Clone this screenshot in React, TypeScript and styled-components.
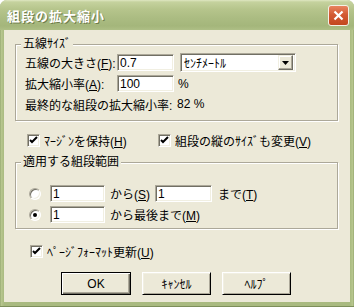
import React from "react";
import styled, { createGlobalStyle } from "styled-components";

const GlobalStyle = createGlobalStyle`
  html, body {
    margin: 0;
    padding: 0;
    background: #ffffff;
  }
  body {
    font-family: "Liberation Sans", "Noto Sans CJK JP", sans-serif;
    font-size: 12px;
    color: #000;
  }
`;

const Window = styled.div`
  width: 354px;
  height: 307px;
  box-sizing: border-box;
  display: flex;
  flex-direction: column;
  border-radius: 7px 7px 0 0;
  overflow: hidden;
  background: linear-gradient(
    to right,
    #8c9f68 0,
    #b9c890 1px,
    #a9ba80 4px,
    #a9ba80 calc(100% - 4px),
    #b9c890 calc(100% - 1px),
    #8c9f68 100%
  );
  padding: 0 4px 5px 4px;
  box-shadow: inset 0 -1px 0 #7d8f5a;
`;

const TitleBar = styled.div`
  height: 30px;
  margin: 0 -4px;
  padding: 0 5px 0 7px;
  display: flex;
  align-items: center;
  justify-content: space-between;
  background: linear-gradient(
    to bottom,
    #dfe7c2 0,
    #c5d29e 2px,
    #b6c58c 9px,
    #abbc82 18px,
    #a4b67b 26px,
    #aebf86 30px
  );
`;

const Title = styled.span`
  color: #fff;
  font-family: "Noto Sans CJK JP", sans-serif;
  font-weight: bold;
  font-size: 13px;
  letter-spacing: 1px;
  text-shadow: 1px 1px 0 #6e7d4c;
`;

const CloseButton = styled.div`
  width: 21px;
  height: 21px;
  box-sizing: border-box;
  border: 1px solid #f4f1e6;
  border-radius: 3px;
  background: linear-gradient(to bottom, #e8845f, #d35a33 45%, #c3471f);
  display: flex;
  align-items: center;
  justify-content: center;
`;

const Body = styled.div`
  flex: 1;
  background: #ece9d8;
  display: flex;
  flex-direction: column;
  padding: 14px 12px 0 11px;
`;

const Group = styled.div<{ $padTop: number; $padBottom: number; $padLeft: number; $marginTop?: number }>`
  position: relative;
  border: 1px solid #aca899;
  box-shadow: inset 1px 1px 0 #fff, 1px 1px 0 #fff;
  margin-top: ${(p) => p.$marginTop ?? 0}px;
  padding: ${(p) => p.$padTop}px 8px ${(p) => p.$padBottom}px ${(p) => p.$padLeft}px;
  display: flex;
  flex-direction: column;
  gap: 4px;
`;

const GroupTitle = styled.span`
  position: absolute;
  top: -9px;
  left: 5px;
  padding: 0 2px;
  line-height: 16px;
  background: #ece9d8;
`;

const Row = styled.div<{ $height?: number }>`
  display: flex;
  align-items: center;
  height: ${(p) => p.$height ?? 17}px;
`;

const Label = styled.span<{ $width?: number; $gap?: number }>`
  white-space: nowrap;
  ${(p) => (p.$width ? `width: ${p.$width}px; flex-shrink: 0;` : "")}
  margin-left: ${(p) => p.$gap ?? 0}px;
`;

const TextBox = styled.input<{ $width: number }>`
  width: ${(p) => p.$width}px;
  height: 17px;
  box-sizing: border-box;
  margin: 0;
  padding: 0 2px;
  font: inherit;
  font-size: 12px;
  color: #000;
  background: #fff;
  border: 1px solid;
  border-color: #aca899 #fff #fff #aca899;
  box-shadow: inset 1px 1px 0 #716f64, inset -1px -1px 0 #f1efe2;
  outline: none;
  flex-shrink: 0;
`;

const Combo = styled.div`
  width: 116px;
  height: 19px;
  box-sizing: border-box;
  margin-left: 6px;
  background: #fff;
  border: 1px solid;
  border-color: #aca899 #fff #fff #aca899;
  box-shadow: inset 1px 1px 0 #716f64, inset -1px -1px 0 #f1efe2;
  display: flex;
  align-items: center;
  justify-content: space-between;
  padding: 2px 2px 2px 3px;
`;

const ComboButton = styled.div`
  width: 15px;
  height: 15px;
  box-sizing: border-box;
  background: #ece9d8;
  border: 1px solid;
  border-color: #f1efe2 #716f64 #716f64 #f1efe2;
  box-shadow: inset -1px -1px 0 #aca899, inset 1px 1px 0 #fff;
  display: flex;
  align-items: center;
  justify-content: center;
`;

const CheckRow = styled.div<{ $left: number; $top: number }>`
  display: flex;
  align-items: center;
  height: 14px;
  margin-top: ${(p) => p.$top}px;
  padding-left: ${(p) => p.$left}px;
`;

const CheckItem = styled.label<{ $width?: number }>`
  display: flex;
  align-items: center;
  gap: 4px;
  white-space: nowrap;
  ${(p) => (p.$width ? `width: ${p.$width}px;` : "")}
`;

const CheckBox = styled.span`
  width: 13px;
  height: 13px;
  box-sizing: border-box;
  background: #fff;
  border: 1px solid;
  border-color: #aca899 #fff #fff #aca899;
  box-shadow: inset 1px 1px 0 #716f64, inset -1px -1px 0 #f1efe2;
  display: flex;
  align-items: center;
  justify-content: center;
  flex-shrink: 0;
`;

const Radio = styled.span<{ $checked?: boolean }>`
  width: 12px;
  height: 12px;
  box-sizing: border-box;
  border-radius: 50%;
  background: #fff;
  border: 1px solid;
  border-color: #aca899 #fff #fff #aca899;
  box-shadow: inset 1px 1px 0 #716f64, inset -1px -1px 0 #f1efe2;
  display: flex;
  align-items: center;
  justify-content: center;
  margin-right: 9px;
  flex-shrink: 0;

  &::after {
    content: "";
    width: 4px;
    height: 4px;
    border-radius: 50%;
    background: ${(p) => (p.$checked ? "#000" : "transparent")};
  }
`;

const ButtonRow = styled.div`
  display: flex;
  justify-content: center;
  gap: 11px;
  margin-top: 14px;
  padding-right: 1px;
`;

const Button = styled.button<{ $default?: boolean }>`
  width: ${(p) => (p.$default ? 70 : 69)}px;
  height: 23px;
  box-sizing: border-box;
  margin: 0;
  padding: 0;
  font: inherit;
  font-size: 12px;
  color: #000;
  background: #ece9d8;
  border: 1px solid;
  border-color: ${(p) => (p.$default ? "#000" : "#fff #000 #000 #fff")};
  box-shadow: ${(p) =>
    p.$default
      ? "inset 1px 1px 0 #fff, inset -1px -1px 0 #716f64, inset -2px -2px 0 #aca899"
      : "inset 1px 1px 0 #f1efe2, inset -1px -1px 0 #aca899"};
`;

const Check = () => (
  <svg width="9" height="9" viewBox="0 0 9 9">
    <path d="M1 4 L3 6 L8 1" stroke="#000" strokeWidth="2" fill="none" />
  </svg>
);

const App = () => {
  return (
    <>
      <GlobalStyle />
      <Window>
        <TitleBar>
          <Title>組段の拡大縮小</Title>
          <CloseButton>
            <svg width="11" height="11" viewBox="0 0 11 11">
              <path d="M1.5 1.5 L9.5 9.5 M9.5 1.5 L1.5 9.5" stroke="#fff" strokeWidth="2.2" />
            </svg>
          </CloseButton>
        </TitleBar>
        <Body>
          <Group $padTop={9} $padBottom={8} $padLeft={9}>
            <GroupTitle>五線ｻｲｽﾞ</GroupTitle>
            <Row>
              <Label $width={92}>
                五線の大きさ(<u>F</u>):
              </Label>
              <TextBox $width={57} value="0.7" readOnly />
              <Combo>
                <span>ｾﾝﾁﾒｰﾄﾙ</span>
                <ComboButton>
                  <svg width="7" height="4" viewBox="0 0 7 4">
                    <path d="M0 0 H7 L3.5 4 Z" fill="#000" />
                  </svg>
                </ComboButton>
              </Combo>
            </Row>
            <Row>
              <Label $width={92}>
                拡大縮小率(<u>A</u>):
              </Label>
              <TextBox $width={57} value="100" readOnly />
              <Label $gap={4}>%</Label>
            </Row>
            <Row $height={16}>
              <Label $width={152}>最終的な組段の拡大縮小率:</Label>
              <Label>82 %</Label>
            </Row>
          </Group>

          <CheckRow $left={12} $top={12}>
            <CheckItem $width={131}>
              <CheckBox>
                <Check />
              </CheckBox>
              <span>
                ﾏｰｼﾞﾝを保持(<u>H</u>)
              </span>
            </CheckItem>
            <CheckItem>
              <CheckBox>
                <Check />
              </CheckBox>
              <span>
                組段の縦のｻｲｽﾞも変更(<u>V</u>)
              </span>
            </CheckItem>
          </CheckRow>

          <Group $padTop={22} $padBottom={5} $padLeft={13} $marginTop={15}>
            <GroupTitle>適用する組段範囲</GroupTitle>
            <Row>
              <Radio />
              <TextBox $width={55} value="1" readOnly />
              <Label $width={45} $gap={5}>
                から(<u>S</u>)
              </Label>
              <TextBox $width={57} value="1" readOnly />
              <Label $gap={6}>
                まで(<u>T</u>)
              </Label>
            </Row>
            <Row>
              <Radio $checked />
              <TextBox $width={55} value="1" readOnly />
              <Label $gap={5}>
                から最後まで(<u>M</u>)
              </Label>
            </Row>
          </Group>

          <CheckRow $left={15} $top={15}>
            <CheckItem>
              <CheckBox>
                <Check />
              </CheckBox>
              <span>
                ﾍﾟｰｼﾞﾌｫｰﾏｯﾄ更新(<u>U</u>)
              </span>
            </CheckItem>
          </CheckRow>

          <ButtonRow>
            <Button $default>OK</Button>
            <Button>ｷｬﾝｾﾙ</Button>
            <Button>ﾍﾙﾌﾟ</Button>
          </ButtonRow>
        </Body>
      </Window>
    </>
  );
};

export default App;
